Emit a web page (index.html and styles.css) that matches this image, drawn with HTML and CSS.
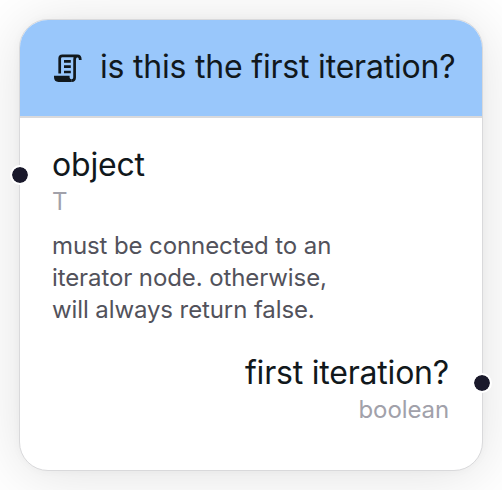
FILE: index.html
```html
<!DOCTYPE html>
<html lang="en">
<head>
<meta charset="utf-8">
<title>Node</title>
<link rel="stylesheet" href="styles.css">
</head>
<body>
<article class="node">
  <header class="node-header">
    <svg class="node-icon" viewBox="0 0 32 32" fill="none" stroke="currentColor" stroke-width="2.700"><path d="M7.700 21.500V6.500Q7.700 3.900 10.400 3.900H25.300Q28.300 3.900 28.300 8M25.300 3.900Q22.600 4.200 22.600 7.500V25.500Q22.600 28.600 19.700 28.600M12 9.300h6.800M12 14.700h6.800M12 20h6.800"/><path fill="currentColor" stroke="none" d="M2 23.700H17.600V25.500Q17.600 27.300 19.700 27.300V29.900H6.500Q2 29.900 2 25Z"/></svg>
    <h1 class="node-title">is this the first iteration?</h1>
  </header>
  <div class="node-body">
    <section class="port port-in">
      <span class="handle handle-in"></span>
      <div class="port-name">object</div>
      <div class="port-type">T</div>
      <p class="port-note">must be connected to an<br>iterator node. otherwise,<br>will always return false.</p>
    </section>
    <section class="port port-out">
      <span class="handle handle-out"></span>
      <div class="port-name">first iteration?</div>
      <div class="port-type">boolean</div>
    </section>
  </div>
</article>
</body>
</html>
```
FILE: styles.css
```css
* { box-sizing: border-box; }
body { margin: 0; padding: 19px; background: #fff; font-family: Inter, sans-serif; color: #11181c; overflow: hidden; }
.node { width: 464px; height: 452px; border: 1px solid #d9d9db; border-radius: 29px; background: #fff; box-shadow: 0 0 10px rgba(0,0,0,.03), 0 4px 60px rgba(0,0,0,.12); }
.node-header { display: flex; align-items: center; gap: 16px; height: 98px; padding: 0 26px 0 32px; background: #99c7fb; border-bottom: 2px solid #d9d9db; border-radius: 28px 28px 0 0; }
.node-icon { width: 32px; height: 32px; flex: none; }
.node-title { margin: -2px 0 0; font-size: 32px; line-height: 40px; font-weight: 400; letter-spacing: -.2px; white-space: nowrap; }
.node-body { padding: 27px 33px 27px 32px; }
.port { position: relative; }
.port-out { margin-top: 27px; text-align: right; }
.port-name { font-size: 32px; line-height: 40px; letter-spacing: -.2px; }
.port-type { margin-top: 1px; font-size: 24px; line-height: 32px; color: #a1a1aa; letter-spacing: -.1px; }
.port-note { margin: 12px 0 0; font-size: 24px; line-height: 32px; color: #52525b; letter-spacing: -.1px; }
.handle { position: absolute; width: 20px; height: 20px; border: 2px solid #fff; border-radius: 50%; background: #1a192b; background-clip: padding-box; }
.handle-in { left: -42px; top: 20px; }
.handle-out { right: -43px; top: 20px; }
```
